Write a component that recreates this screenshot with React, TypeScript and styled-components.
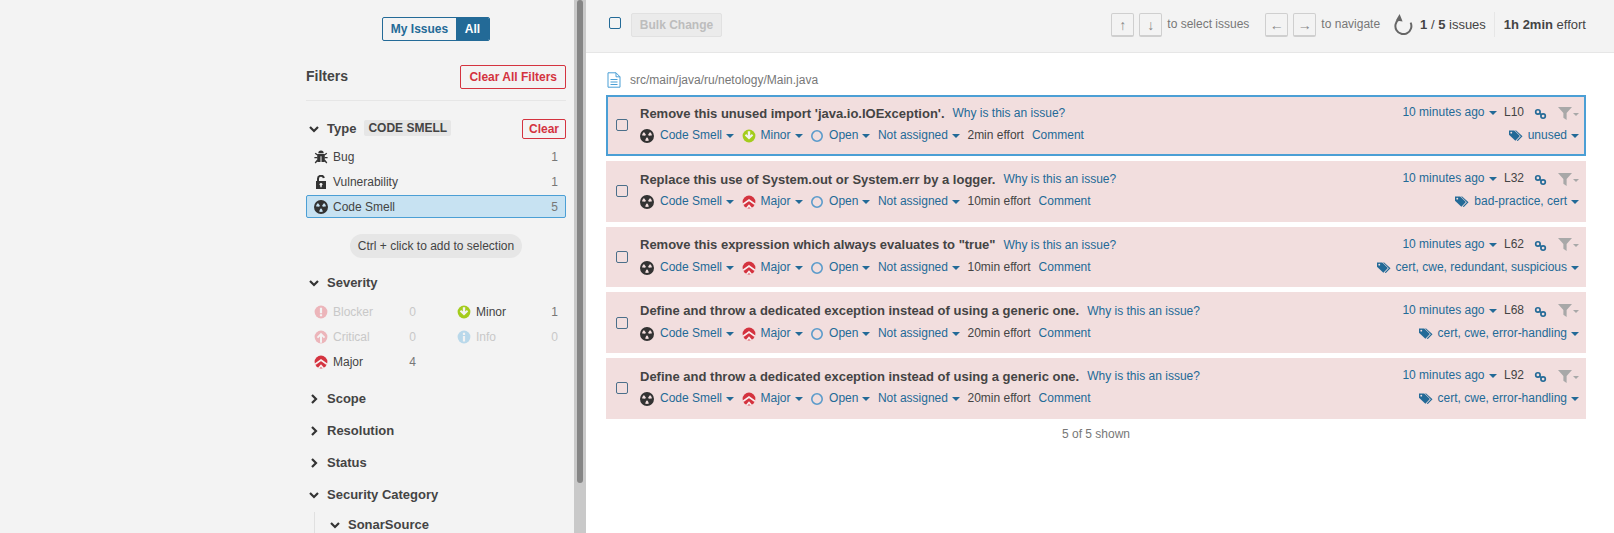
import React from 'react';
import styled, { createGlobalStyle } from 'styled-components';

const GlobalStyle = createGlobalStyle`
  html, body {
    margin: 0;
    padding: 0;
    background: #fff;
    overflow: hidden;
  }
  body {
    font-family: "Liberation Sans", Arial, sans-serif;
    font-size: 12px;
    color: #444;
  }
`;

const Page = styled.div`
  display: flex;
  width: 1614px;
  height: 533px;
  overflow: hidden;
`;

const Side = styled.aside`
  width: 574px;
  height: 533px;
  flex: none;
  box-sizing: border-box;
  background: #f3f3f3;
  padding: 17px 8px 0 306px;
  overflow: hidden;
`;

const ScrollTrack = styled.div`
  width: 12px;
  flex: none;
  background: #c9c9c9;
  padding: 0 3px;
  box-sizing: border-box;
`;

const ScrollThumb = styled.div`
  height: 483px;
  background: #858585;
  border-radius: 3px;
`;

const Toggle = styled.div`
  display: flex;
  width: 108px;
  height: 24px;
  margin: 0 auto 24px;
  font-weight: bold;
  box-sizing: border-box;
  border: 1px solid #236a97;
  border-radius: 2px;
  overflow: hidden;
`;

const ToggleItem = styled.div<{ $active?: boolean }>`
  display: flex;
  align-items: center;
  justify-content: center;
  height: 100%;
  flex: ${(p) => (p.$active ? '0 0 33px' : '1')};
  color: ${(p) => (p.$active ? '#fff' : '#236a97')};
  background: ${(p) => (p.$active ? '#236a97' : 'transparent')};
`;

const FiltersHead = styled.div`
  display: flex;
  justify-content: space-between;
  align-items: center;
  padding-bottom: 11px;
  border-bottom: 1px solid #e6e6e6;
  margin-bottom: 18px;
`;

const FiltersTitle = styled.h3`
  margin: 0 0 2px;
  font-size: 14px;
  font-weight: bold;
  color: #444;
`;

const DangerButton = styled.button<{ $small?: boolean }>`
  height: ${(p) => (p.$small ? 20 : 24)}px;
  padding: 0 ${(p) => (p.$small ? 6 : 8)}px;
  background: transparent;
  border: 1px solid #d4333f;
  border-radius: 2px;
  color: #d4333f;
  font: bold 12px "Liberation Sans", Arial, sans-serif;
`;

const FacetHead = styled.div<{ $indent?: boolean }>`
  display: flex;
  align-items: center;
  height: 20px;
  padding-left: ${(p) => (p.$indent ? 12 : 0)}px;
  font-size: 13px;
  font-weight: bold;
  color: #444;
`;

const TypeLabel = styled.div`
  display: flex;
  align-items: center;
  margin-bottom: 2px;
`;

const ChevronBox = styled.svg`
  width: 10px;
  height: 10px;
  margin: 1px 8px 0 3px;
  flex: none;
`;

const Badge = styled.span`
  margin-left: 8px;
  padding: 0 4px;
  height: 16px;
  line-height: 16px;
  background: #e6e6e6;
  border-radius: 2px;
  font-size: 12px;
`;

const Spacer = styled.div`
  flex: 1;
`;

const FacetList = styled.div`
  padding-top: 6px;
`;

const FacetRow = styled.div<{ $active?: boolean; $dim?: boolean }>`
  display: flex;
  align-items: center;
  height: 23px;
  margin-bottom: 2px;
  padding: 0 7px;
  box-sizing: border-box;
  border: 1px solid ${(p) => (p.$active ? '#4b9fd5' : 'transparent')};
  border-radius: 2px;
  background: ${(p) => (p.$active ? '#c7e2f2' : 'transparent')};
  color: ${(p) => (p.$dim ? '#c8c8c8' : '#444')};
`;

const FacetLabel = styled.span`
  margin-left: 5px;
  flex: 1;
`;

const FacetCount = styled.span<{ $dim?: boolean }>`
  color: ${(p) => (p.$dim ? '#c8c8c8' : '#777')};
`;

const Hint = styled.div`
  width: 172px;
  height: 24px;
  margin: 16px auto 14px;
  line-height: 24px;
  text-align: center;
  background: #e6e6e6;
  border-radius: 12px;
`;

const SeverityGrid = styled.div`
  display: grid;
  grid-template-columns: 118px 117px;
  column-gap: 25px;
  padding-top: 8px;
  margin-bottom: 13px;
`;

const FacetBlock = styled.div`
  margin-bottom: 12px;
`;

const Tree = styled.div`
  margin: 8px 0 0 8px;
  padding-top: 2px;
  border-left: 1px solid #e0e0e0;
  height: 40px;
`;

const Main = styled.main`
  flex: 1;
  min-width: 0;
`;

const TopBar = styled.div`
  display: flex;
  align-items: center;
  height: 53px;
  box-sizing: border-box;
  padding: 0 28px 2px 23px;
  background: #f3f3f3;
  border-bottom: 1px solid #e6e6e6;
`;

const CheckBox = styled.span<{ $top?: boolean }>`
  display: block;
  width: 12px;
  height: 12px;
  flex: none;
  box-sizing: border-box;
  margin-bottom: ${(p) => (p.$top ? 4 : 0)}px;
  border: 1px solid ${(p) => (p.$top ? '#236a97' : '#4b6f8a')};
  border-radius: 2px;
`;

const BulkButton = styled.button`
  height: 24px;
  width: 91px;
  margin-left: 10px;
  padding: 0;
  background: #ebebeb;
  border: 1px solid #e1e1e1;
  border-radius: 2px;
  color: #bdbdbd;
  font: bold 12px "Liberation Sans", Arial, sans-serif;
`;

const KeyCap = styled.span`
  display: inline-flex;
  align-items: center;
  justify-content: center;
  width: 23px;
  height: 24px;
  box-sizing: border-box;
  margin-right: 5px;
  background: #f3f3f3;
  border: 1px solid #cfcfcf;
  border-bottom-width: 2px;
  border-radius: 2px;
  color: #888;
  font-size: 14px;
`;

const KeyHint = styled.span<{ $gap?: number }>`
  color: #777;
  margin: 0 ${(p) => p.$gap ?? 0}px 2px 0;
`;

const RefreshBox = styled.svg`
  width: 20px;
  height: 22px;
  margin-bottom: 2px;
`;

const Paging = styled.span`
  font-size: 13px;
  color: #444;
  padding-right: 8px;
  margin: 0 0 2px 7px;
`;

const Effort = styled.span`
  font-size: 13px;
  color: #444;
  margin-bottom: 2px;
  padding: 5px 0 5px 9px;
  border-left: 1px solid #e6e6e6;
`;

const Content = styled.div`
  padding: 17px 28px 0 20px;
`;

const FileLine = styled.div`
  display: flex;
  align-items: center;
  height: 20px;
  color: #777;
  margin-bottom: 5px;
`;

const FileIcon = styled.svg`
  width: 14px;
  height: 16px;
  margin: 0 9px 0 1px;
`;

const Issue = styled.div<{ $selected?: boolean }>`
  display: flex;
  align-items: center;
  height: 60.75px;
  box-sizing: border-box;
  margin-bottom: 5px;
  padding: 0 ${(p) => (p.$selected ? 5 : 7)}px 0 ${(p) => (p.$selected ? 8 : 10)}px;
  background: #f2dede;
  border: ${(p) => (p.$selected ? '2px solid #4b9fd5' : '0')};
`;

const IssueBody = styled.div`
  flex: 1;
  margin-left: 12px;
  padding-bottom: 2px;
  min-width: 0;
`;

const IssueLine = styled.div<{ $first?: boolean }>`
  display: flex;
  align-items: center;
  height: 16px;
  margin-bottom: ${(p) => (p.$first ? 6 : 0)}px;
`;

const Title = styled.span`
  font-size: 13px;
  font-weight: bold;
  color: #444;
`;

const WhyLink = styled.span`
  margin-left: 8px;
  color: #236a97;
`;

const Meta = styled.span<{ $tag?: boolean }>`
  display: inline-flex;
  align-items: center;
  color: #236a97;
  margin-right: ${(p) => (p.$tag ? 0 : 7.5)}px;
`;

const Plain = styled.span`
  color: #444;
  margin-right: 8px;
`;

const Caret = styled.span<{ $grey?: boolean }>`
  display: inline-block;
  margin-left: ${(p) => (p.$grey ? 1 : 4)}px;
  margin-top: 2px;
  border-style: solid;
  border-width: ${(p) => (p.$grey ? '3.5px 3.5px 0 3.5px' : '4px 4px 0 4px')};
  border-color: ${(p) => (p.$grey ? '#a8a8a8' : '#236a97')} transparent transparent transparent;
`;

const IconSlot = styled.span<{ $gap?: number }>`
  display: inline-flex;
  margin-top: 2px;
  margin-right: ${(p) => p.$gap ?? 5}px;
`;

const TimeGroup = styled.div`
  display: flex;
  align-items: center;
  margin-bottom: 2px;
`;

const LineNo = styled.span`
  color: #444;
  width: 30px;
`;

const Shown = styled.div`
  margin-top: 8px;
  text-align: center;
  color: #777;
`;

const chevron = (open: boolean) => (
  <ChevronBox viewBox="0 0 10 10">
    <path
      d={open ? 'M1 3 5 7 9 3' : 'M3 1 7 5 3 9'}
      fill="none"
      stroke="#333"
      strokeWidth="2.2"
    />
  </ChevronBox>
);

const SmellIcon = () => (
  <svg width="14" height="14" viewBox="0 0 14 14">
    <circle cx="7" cy="7" r="6" fill="none" stroke="#333" strokeWidth="2" />
    <path d="M7 7 3.35 2.24A6 6 0 0 1 10.65 2.24Z" fill="#333" />
    <path d="M7 7 1.05 6.22A6 6 0 0 0 4.7 12.54Z" fill="#333" />
    <path d="M7 7 12.95 6.22A6 6 0 0 1 9.3 12.54Z" fill="#333" />
    <circle cx="7" cy="7" r="1.8" fill="#333" />
  </svg>
);

const BugIcon = () => (
  <svg width="14" height="14" viewBox="0 0 14 14">
    <path d="M4.3 3.2A2.7 2.7 0 0 1 9.7 3.2Z" fill="#333" />
    <path d="M3.2 3.9h7.6v8.2H7.5V6.2h-1v5.9H3.2Z" fill="#333" />
    <path
      d="M3.6 5 1.2 3.2M10.4 5l2.4-1.8M3.4 7.6H.4M10.6 7.6h3M3.6 10 1.2 13M10.4 10l2.4 3"
      stroke="#333"
      strokeWidth="1.3"
      fill="none"
    />
  </svg>
);

const LockIcon = () => (
  <svg width="14" height="14" viewBox="0 0 14 14">
    <path d="M2 6h10v8H2Z" fill="#333" />
    <circle cx="7" cy="9.3" r="1.4" fill="#f3f3f3" />
    <path d="M6.3 10h1.4v2.2H6.3Z" fill="#f3f3f3" />
    <path d="M4 6.5V3.8a3 3 0 0 1 5.9-.8" fill="none" stroke="#333" strokeWidth="2" />
  </svg>
);

type SevName = 'blocker' | 'critical' | 'major' | 'minor' | 'info';

const SeverityIcon = ({ kind }: { kind: SevName }) => {
  const fill = kind === 'minor' ? '#a4cc1c' : kind === 'info' ? '#b9d8ea' : kind === 'major' ? '#d4333f' : '#ecb5ba';
  return (
    <svg width="14" height="14" viewBox="0 0 14 14">
      <clipPath id="sev-disc">
        <circle cx="7" cy="7" r="6.4" />
      </clipPath>
      <circle cx="7" cy="7" r="6.4" fill={fill} />
      {kind === 'blocker' && <path d="M5.9 2.8h2.2v5.4H5.9ZM5.9 9.2h2.2v2.1H5.9Z" fill="#f3f3f3" />}
      {kind === 'critical' && (
        <path d="M7 2.8 11.2 7 9.9 8.2 8 6.6v6.2H6V6.6L4.1 8.2 2.8 7Z" fill="#f3f3f3" />
      )}
      {kind === 'major' && (
        <g fill="none" stroke="#f9eeee" strokeWidth="1.8" clipPath="url(#sev-disc)">
          <path d="M0 10 7 5 14 10" />
          <path d="M4 14 7 10.6 10 14" />
        </g>
      )}
      {kind === 'minor' && <path d="M5.8 2.2h2.4v4.2l1.7-1.4 1.3 1.4L7 10.6 2.8 6.4 4.1 5l1.7 1.4Z" fill="#f3f3f3" />}
      {kind === 'info' && <path d="M5.9 2.8h2.2v2.1H5.9ZM5.9 6h2.2v5.4H5.9Z" fill="#f3f3f3" />}
    </svg>
  );
};

const OpenIcon = () => (
  <svg width="14" height="14" viewBox="0 0 14 14">
    <circle cx="7" cy="7" r="5.2" fill="none" stroke="#5b9bcb" strokeWidth="1.6" />
  </svg>
);

const LinkIcon = () => (
  <svg width="13" height="12" viewBox="0 0 14 12">
    <circle cx="4.2" cy="3.8" r="2.4" fill="none" stroke="#236a97" strokeWidth="1.8" />
    <circle cx="9.8" cy="8.2" r="2.4" fill="none" stroke="#236a97" strokeWidth="1.8" />
    <path d="M5.8 5.2 8.2 6.8" stroke="#236a97" strokeWidth="1.6" />
  </svg>
);

const FunnelIcon = () => (
  <svg width="14" height="13" viewBox="0 0 13 12">
    <path d="M0 0h13L8 5.5V12L5 10V5.5Z" fill="#a8a8a8" />
  </svg>
);

const TagIcon = () => (
  <svg width="15" height="12" viewBox="0 0 16 12">
    <path d="M0 0h5.6l6 6-4.8 5L0 4.6Z" fill="#236a97" />
    <path d="M7.6 0 14.4 6.2 9.4 11.4 8.2 10.8l4.4-4.6L6.4 0Z" fill="#236a97" />
    <circle cx="2.4" cy="2.4" r="1" fill="#f2dede" />
  </svg>
);

const RefreshIcon = () => (
  <RefreshBox viewBox="0 0 20 22">
    <path d="M6 6.4A8 8 0 1 0 17.6 9.6" fill="none" stroke="#666" strokeWidth="2" />
    <path d="M6.6 1 9.6 8.6 2.8 7.4Z" fill="#666" />
  </RefreshBox>
);

const severityFacets: { kind: SevName; name: string; count: number }[] = [
  { kind: 'blocker', name: 'Blocker', count: 0 },
  { kind: 'minor', name: 'Minor', count: 1 },
  { kind: 'critical', name: 'Critical', count: 0 },
  { kind: 'info', name: 'Info', count: 0 },
  { kind: 'major', name: 'Major', count: 4 },
];

const issues: { title: string; sev: SevName; effort: string; line: number; tags: string }[] = [
  { title: "Remove this unused import 'java.io.IOException'.", sev: 'minor', effort: '2min', line: 10, tags: 'unused' },
  { title: 'Replace this use of System.out or System.err by a logger.', sev: 'major', effort: '10min', line: 32, tags: 'bad-practice, cert' },
  { title: 'Remove this expression which always evaluates to "true"', sev: 'major', effort: '10min', line: 62, tags: 'cert, cwe, redundant, suspicious' },
  { title: 'Define and throw a dedicated exception instead of using a generic one.', sev: 'major', effort: '20min', line: 68, tags: 'cert, cwe, error-handling' },
  { title: 'Define and throw a dedicated exception instead of using a generic one.', sev: 'major', effort: '20min', line: 92, tags: 'cert, cwe, error-handling' },
];

export default function App() {
  return (
    <Page>
      <GlobalStyle />
      <Side>
        <Toggle>
          <ToggleItem>My Issues</ToggleItem>
          <ToggleItem $active>All</ToggleItem>
        </Toggle>
        <FiltersHead>
          <FiltersTitle>Filters</FiltersTitle>
          <DangerButton>Clear All Filters</DangerButton>
        </FiltersHead>
        <FacetHead>
          <TypeLabel>
            {chevron(true)}
            Type
            <Badge>CODE SMELL</Badge>
          </TypeLabel>
          <Spacer />
          <DangerButton $small>Clear</DangerButton>
        </FacetHead>
        <FacetList>
          <FacetRow>
            <BugIcon />
            <FacetLabel>Bug</FacetLabel>
            <FacetCount>1</FacetCount>
          </FacetRow>
          <FacetRow>
            <LockIcon />
            <FacetLabel>Vulnerability</FacetLabel>
            <FacetCount>1</FacetCount>
          </FacetRow>
          <FacetRow $active>
            <SmellIcon />
            <FacetLabel>Code Smell</FacetLabel>
            <FacetCount>5</FacetCount>
          </FacetRow>
        </FacetList>
        <Hint>Ctrl + click to add to selection</Hint>
        <FacetHead>{chevron(true)}Severity</FacetHead>
        <SeverityGrid>
          {severityFacets.map((f) => (
            <FacetRow key={f.name} $dim={f.count === 0}>
              <SeverityIcon kind={f.kind} />
              <FacetLabel>{f.name}</FacetLabel>
              <FacetCount $dim={f.count === 0}>{f.count}</FacetCount>
            </FacetRow>
          ))}
        </SeverityGrid>
        <FacetBlock>
          <FacetHead>{chevron(false)}Scope</FacetHead>
        </FacetBlock>
        <FacetBlock>
          <FacetHead>{chevron(false)}Resolution</FacetHead>
        </FacetBlock>
        <FacetBlock>
          <FacetHead>{chevron(false)}Status</FacetHead>
        </FacetBlock>
        <FacetHead>{chevron(true)}Security Category</FacetHead>
        <Tree>
          <FacetHead $indent>{chevron(true)}SonarSource</FacetHead>
        </Tree>
      </Side>
      <ScrollTrack>
        <ScrollThumb />
      </ScrollTrack>
      <Main>
        <TopBar>
          <CheckBox $top />
          <BulkButton disabled>Bulk Change</BulkButton>
          <Spacer />
          <KeyCap>↑</KeyCap>
          <KeyCap>↓</KeyCap>
          <KeyHint $gap={16}>to select issues</KeyHint>
          <KeyCap>←</KeyCap>
          <KeyCap>→</KeyCap>
          <KeyHint $gap={13}>to navigate</KeyHint>
          <RefreshIcon />
          <Paging>
            <b>1</b> / <b>5</b> issues
          </Paging>
          <Effort>
            <b>1h 2min</b> effort
          </Effort>
        </TopBar>
        <Content>
          <FileLine>
            <FileIcon viewBox="0 0 14 16">
              <path d="M1 .8h8l4 4v10.4H1ZM9 .8v4h4M3.5 7.5h7M3.5 10h7M3.5 12.5h7" fill="none" stroke="#4b9fd5" strokeWidth="1" />
            </FileIcon>
            src/main/java/ru/netology/Main.java
          </FileLine>
          {issues.map((it, i) => (
            <Issue key={it.line} $selected={i === 0}>
              <CheckBox />
              <IssueBody>
                <IssueLine $first>
                  <Title>{it.title}</Title>
                  <WhyLink>Why is this an issue?</WhyLink>
                  <Spacer />
                  <TimeGroup>
                    <Meta>
                      10 minutes ago
                      <Caret />
                    </Meta>
                    <LineNo>L{it.line}</LineNo>
                  </TimeGroup>
                  <IconSlot $gap={11}>
                    <LinkIcon />
                  </IconSlot>
                  <FunnelIcon />
                  <Caret $grey />
                </IssueLine>
                <IssueLine>
                  <IconSlot $gap={6}>
                    <SmellIcon />
                  </IconSlot>
                  <Meta>
                    Code Smell
                    <Caret />
                  </Meta>
                  <IconSlot>
                    <SeverityIcon kind={it.sev} />
                  </IconSlot>
                  <Meta>
                    {it.sev === 'minor' ? 'Minor' : 'Major'}
                    <Caret />
                  </Meta>
                  <IconSlot>
                    <OpenIcon />
                  </IconSlot>
                  <Meta>
                    Open
                    <Caret />
                  </Meta>
                  <Meta>
                    Not assigned
                    <Caret />
                  </Meta>
                  <Plain>{it.effort} effort</Plain>
                  <Meta>Comment</Meta>
                  <Spacer />
                  <IconSlot $gap={4}>
                    <TagIcon />
                  </IconSlot>
                  <Meta $tag>
                    {it.tags}
                    <Caret />
                  </Meta>
                </IssueLine>
              </IssueBody>
            </Issue>
          ))}
          <Shown>5 of 5 shown</Shown>
        </Content>
      </Main>
    </Page>
  );
}
